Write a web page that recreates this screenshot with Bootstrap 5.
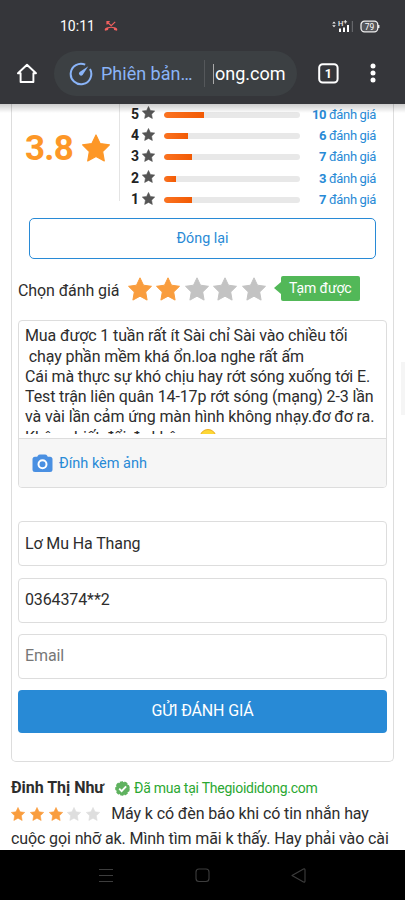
<!DOCTYPE html>
<html lang="vi">
<head>
<meta charset="utf-8">
<meta name="viewport" content="width=device-width, initial-scale=1">
<title>Đánh giá sản phẩm</title>
<link href="https://cdn.jsdelivr.net/npm/bootstrap@5.3.0/dist/css/bootstrap.min.css" rel="stylesheet">
<style>
body{font-family:Roboto,"Liberation Sans",sans-serif;font-size:16px;line-height:20px;color:#2d2d2d;background:#fff;height:900px;overflow:hidden}
svg{display:block;flex:none}
.top-area{height:104px;background:#35363a;color:#fff}
.status-row{height:51px;padding:1px 25px 0 60px;font-size:14px}
.url-row{height:45px;padding-left:17px}
.url-pill{width:243px;height:45px;border-radius:23px;background:#3c4043;margin-left:17px;padding-left:15px;font-size:18px;white-space:nowrap}
.lite{color:#8ab4f8;margin-left:8px;width:103px}
.sep{width:1px;height:27px;background:#55585b}
.host{margin-left:8px;border-left:1px solid #aaa;line-height:20px;padding-left:1px}
.page-area{height:746px;padding:0 11px;overflow:hidden;position:relative}
.page-area::before{content:"";position:absolute;left:0;right:0;top:0;height:9px;background:linear-gradient(#0003,#0000);z-index:2}
.review-box{height:658px;border:1px solid #ddd;border-top:0;border-radius:0 0 5px 5px;padding:0 6px}
.score{width:102px;height:97px;border-right:1px solid #e4e4e4;padding-left:7px;color:#fd9727;font-size:35px;font-weight:700;letter-spacing:-.8px}
.score-star{margin:-9px 0 0 9px}
.rate-row{height:21.35px;font-size:13px}
.rate-row b.n{width:10px;color:#222;font-size:14px;margin:-2px 0 0 -1px}
.rate-row svg{margin:-4px 0 0 1px}
.track{width:136px;height:6px;border-radius:3px;background:#e8e8e8;margin-left:9px}
.track .progress-bar{background:linear-gradient(90deg,#fb7321,#f25a04);border-radius:3px 0 0 3px}
.count{color:#288ad6;margin-left:auto;margin-right:11px;letter-spacing:-.36px}
.close-btn{height:41px;margin:0 11px;border:1px solid #288ad6;border-radius:5px;color:#288ad6;font-size:14.3px;background:#fff}
.pick{height:61px;font-size:16px;letter-spacing:-.1px}
.tag{background:#52b858;color:#fff;border-radius:2px;height:25px;width:79px;font-size:14px;letter-spacing:-.1px;position:relative;margin-left:15px;margin-top:-2px;padding-bottom:1px}
.tag::before{content:"";position:absolute;left:-7px;top:6px;border:6.5px solid transparent;border-left:0;border-right:7px solid #52b858}
.comment-box{height:168px;border:1px solid #ddd;border-radius:4px;overflow:hidden}
.comment-text{height:113px;overflow:hidden;padding:5.6px 0 0 6px;line-height:20.25px;white-space:pre;font-size:16px;letter-spacing:-.12px;position:relative}
.attach{height:50px;background:#f6f6f6;border-top:1px solid #ddd;margin-top:4px;padding:1px 0 0 13px;color:#288ad6;font-size:14.5px}
.field{height:45px;border:1px solid #ddd;border-radius:4px;padding:0 6px 1px;font-size:16px;letter-spacing:-.12px;color:#2d2d2d;margin-bottom:11.3px;display:block;width:100%;outline:0}
.field::placeholder{color:#777;opacity:1}
.send{height:43px;background:#288ad6;color:#fff;border-radius:4px;border:0;font-size:16px;letter-spacing:-.15px;padding-bottom:2px}
.nav-area{height:50px;background:#000}
.rv{font-size:16px;line-height:24px;white-space:nowrap;letter-spacing:-.11px;padding-top:14px}
.bought{margin-left:4px;font-size:14px;color:#2ba832;letter-spacing:-.25px}
.scroll-thumb{position:absolute;right:0;top:258px;width:4px;height:53px;background:#f5f5f5}
</style>
<script src="https://cdn.jsdelivr.net/npm/bootstrap@5.3.0/dist/js/bootstrap.bundle.min.js"></script>
</head>
<body>
<svg width="0" height="0" class="position-absolute"><defs>
<path id="st" d="M12 .8l3.5 7.4 8 1.1-5.8 5.7 1.4 8.1-7.1-3.9-7.1 3.9 1.4-8.1L.5 9.3l8-1.1z" stroke-width="1" stroke-linejoin="round"/>
</defs></svg>
<header class="top-area">
  <div class="status-row d-flex align-items-center">
    <span>10:11</span>
    <svg class="ms-2" width="16" height="14" viewBox="0 0 16 14"><path d="M2 11.8C1 10 2.500 9 4.500 8.300c2.200-.8 5-.8 7.200 0 2 .7 3.200 1.700 2.300 3.500l-2.900-.9-.3-1.700a9 9 0 0 0-5.400 0l-.4 1.700z" fill="#f0605f"/><path d="M4 5.500V2.700h2.700M4.200 3l4 3.700 4-3.800" fill="none" stroke="#f0605f" stroke-width="1.200"/></svg>
    <svg class="ms-auto" width="22" height="14" viewBox="0 0 22 14"><path d="M.2 4.500L2 2.500l1.800 2zM.2 6.200L2 8.200l1.800-2z" fill="#eee"/><text x="6" y="6.800" font-size="7.500" font-weight="500" fill="#eee">H</text><path d="M11.500 2.800h3.600M13.300 1v3.600" stroke="#eee" stroke-width=".9"/><path d="M7 9.500h2V13H7zM11 8.500h2V13h-2zM15 6h2v7h-2z" fill="#fff"/><path d="M19.800 2h1.200v11h-1.200z" fill="#65666a"/></svg>
    <svg style="margin-left:6px" width="20" height="13" viewBox="0 0 20 13"><rect x="1" y="1.200" width="16.800" height="10.600" rx="3.500" fill="#55565a" stroke="#eee" stroke-width="1.300"/><path d="M18.700 5v3" stroke="#eee" stroke-width="1.500"/><text x="9.400" y="9.500" text-anchor="middle" font-size="8.500" textLength="9.500" lengthAdjust="spacingAndGlyphs" fill="#fff">79</text></svg>
  </div>
  <div class="url-row d-flex align-items-center">
    <svg width="20" height="21" viewBox="0 0 20 21"><path d="M10 1.700L1 10.300h2.600V19h12.800v-8.700H19z" fill="none" stroke="#fff" stroke-width="1.900" stroke-linejoin="round"/></svg>
    <div class="url-pill d-flex align-items-center">
      <svg width="24" height="24" viewBox="0 0 24 24"><path d="M16.200 2.600A10.300 10.300 0 1 0 21 7" fill="none" stroke="#8ab4f8" stroke-width="2"/><path d="M19.300 4.200l-5.700 8.900a2.100 2.100 0 1 1-3-3z" fill="#8ab4f8"/></svg>
      <span class="lite">Phiên bản…</span><span class="sep"></span><span class="host">ong.com</span>
    </div>
    <svg style="margin-left:21px" width="21" height="21" viewBox="0 0 21 21"><rect x="1.200" y="1.200" width="18.400" height="18.400" rx="3.500" fill="none" stroke="#fff" stroke-width="2"/><text x="10.300" y="14.800" text-anchor="middle" font-size="12.500" font-weight="700" fill="#fff">1</text></svg>
    <svg style="margin-left:31px;margin-top:-2px" width="6" height="20" viewBox="0 0 6 20"><g fill="#fff"><circle cx="3" cy="3" r="2.500"/><circle cx="3" cy="10" r="2.500"/><circle cx="3" cy="17" r="2.500"/></g></svg>
  </div>
</header>
<main class="page-area">
  <div class="scroll-thumb"></div>
  <section class="review-box">
    <div class="d-flex">
      <div class="score d-flex align-items-center"><span class="pb-2">3.8</span><svg class="score-star" width="28" height="28" viewBox="0 0 24 24" fill="#fd9727" stroke="#fd9727"><use href="#st"/></svg></div>
      <div class="flex-grow-1" style="padding-left:12px" id="rates"></div>
    </div>
    <div style="height:7px"></div>
    <div class="close-btn d-flex align-items-center justify-content-center">Đóng lại</div>
    <div class="pick d-flex align-items-center"><span class="pt-1">Chọn đánh giá</span><div class="d-flex" id="choose" style="gap:4.500px;margin-left:8.500px"></div><span class="tag d-flex align-items-center justify-content-center">Tạm được</span></div>
    <div class="comment-box">
      <div class="comment-text">Mua được 1 tuần rất ít Sài chỉ Sài vào chiều tối
 chạy phần mềm khá ổn.loa nghe rất ấm
Cái mà thực sự khó chịu hay rớt sóng xuống tới E.
Test trận liên quân 14-17p rớt sóng (mạng) 2-3 lần
và vài lần cảm ứng màn hình không nhạy.đơ đơ ra.
Không biết đổi đc không <svg class="d-inline-block align-top" width="18" height="18" viewBox="0 0 18 18"><circle cx="9" cy="9.500" r="8" fill="#fdd735" stroke="#e9ad25"/></svg></div>
      <div class="attach d-flex align-items-center"><svg width="21" height="19" viewBox="0 0 21 19"><path d="M6 1.500Q6.500.5 8 .5h5q1.500 0 2 1l.8 1.300H18q2.500 0 2.500 2.500v10.200Q20.500 18 18 18H3Q.5 18 .5 15.500V5.300Q.5 2.800 3 2.800h2.200z" fill="#4a90e2"/><circle cx="10.500" cy="10.300" r="4" fill="none" stroke="#fff" stroke-width="2"/></svg><span style="margin-left:6px">Đính kèm ảnh</span></div>
    </div>
    <div style="height:33.500px"></div>
    <input class="field" value="Lơ Mu Ha Thang" aria-label="Họ tên">
    <input class="field" value="0364374**2" aria-label="Điện thoại">
    <input class="field" placeholder="Email" aria-label="Email">
    <button class="send w-100">GỬI ĐÁNH GIÁ</button>
  </section>
  <section class="rv">
    <div class="d-flex align-items-center"><b style="letter-spacing:-.03px">Đinh Thị Như</b>
      <svg style="margin-left:11px" width="15" height="15" viewBox="0 0 15 15"><circle cx="7.500" cy="7.500" r="6.200" fill="#5fb25f" stroke="#5fb25f" stroke-width="2.200" stroke-dasharray="3 1.330"/><circle cx="7.500" cy="7.500" r="6.500" fill="#5fb25f"/><path d="M4.200 7.700l2.400 2.400 4.500-4.700" fill="none" stroke="#fff" stroke-width="1.900"/></svg>
      <span class="bought">Đã mua tại Thegioididong.com</span></div>
    <div class="d-flex align-items-center" style="height:27px"><div class="d-flex" id="given" style="gap:4.800px"></div><span style="margin-left:11px">Máy k có đèn báo khi có tin nhắn hay</span></div>
    <div>cuộc gọi nhỡ ak. Mình tìm mãi k thấy. Hay phải vào cài</div>
  </section>
</main>
<footer class="nav-area">
  <svg width="405" height="50" viewBox="0 0 405 50" fill="none" stroke="#3d3d3d" stroke-width="1.100"><path d="M99 19.500h14M99 25.500h14M99 31.500h14"/><rect x="196" y="19" width="13" height="12.500" rx="3"/><path d="M292 25.500l11.500-6.500q1.500-.5 1.500 1v11q0 1.500-1.500 1z" stroke-linejoin="round"/></svg>
</footer>
<script>
const star=(s,c)=>`<svg width="${s}" height="${s}" viewBox="0 0 24 24" fill="${c}" stroke="${c}"><use href="#st"/></svg>`;
document.getElementById('rates').innerHTML=[[5,10,40],[4,6,24],[3,7,28],[2,3,12],[1,7,28]].map(([n,c,w])=>
`<div class="rate-row d-flex align-items-center"><b class="n">${n}</b>${star(13,'#555')}<div class="track progress"><div class="progress-bar" style="width:${w/1.36}%"></div></div><span class="count"><b>${c}</b> đánh giá</span></div>`).join('');
document.getElementById('choose').innerHTML=[1,1,0,0,0].map(v=>star(24,v?'#f99d3e':'#c3c3c3')).join('');
document.getElementById('given').innerHTML=[1,1,1,0,0].map(v=>star(14,v?'#f99d3e':'#dedede')).join('');
</script>
</body>
</html>
